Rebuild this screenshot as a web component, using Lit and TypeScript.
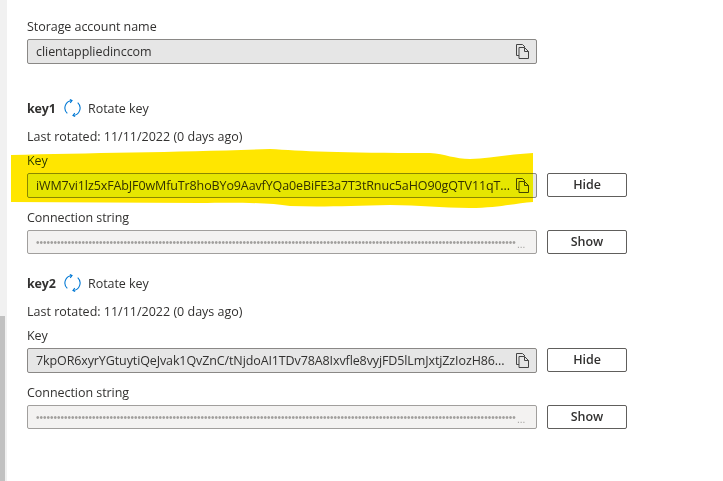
import { LitElement, html, css, svg } from "lit";
import { customElement } from "lit/decorators.js";

const copyIcon = html`<svg class="copy" width="13" height="15" viewBox="0 0 13 15" fill="none" stroke="#444" stroke-width="1">
  <path d="M3 11.5H0.5V0.5H6.5L9 3" />
  <path d="M3 3.5H8.5L12.5 7.5V14.5H3Z" />
  <path d="M8.5 3.5V7.5H12.5" />
</svg>`;

const rotateIcon = html`<svg class="rotate" width="17" height="18" viewBox="0 0 18 18" fill="none" stroke="#0078d4" stroke-width="1.15">
  <path d="M3.5 14.8A8 8 0 0 1 8.5 1" />
  <path d="M6.2 0L8.5 1L6.6 3.6" />
  <path d="M14.5 3.2A8 8 0 0 1 9.5 17" />
  <path d="M11.8 18L9.5 17L11.4 14.4" />
</svg>`;

const DOTS = "•".repeat(137);

@customElement("app-root")
export class AppRoot extends LitElement {
  static styles = css`
    :host {
      display: flex;
      width: 723px;
      height: 481px;
      overflow: hidden;
      position: relative;
      background: #fff;
      font-family: "Open Sans", "Noto Sans", sans-serif;
      font-size: 12.5px;
      letter-spacing: -0.05px;
      color: #323130;
    }
    .track {
      width: 7px;
      flex: none;
      background: #f1f1f1;
      display: flex;
      flex-direction: column;
      justify-content: flex-end;
    }
    .thumb { width: 5px; height: 165px; background: #c1c1c1; }
    .main { flex: none; width: 620px; padding: 17px 0 0 20px; }
    .label { height: 19px; line-height: 19px; display: block; margin-bottom: 3px; }
    .row { display: flex; gap: 10px; height: 25px; }
    .field {
      width: 510px;
      height: 25px;
      box-sizing: border-box;
      flex: none;
      display: flex;
      align-items: center;
      padding: 0 7px 0 8px;
      border: 1px solid #8a8886;
      border-radius: 2px;
      background: #e6e6e6;
      white-space: nowrap;
      overflow: hidden;
    }
    .field.light {
      height: 24px;
      background: #f3f2f1;
      border-color: #a19f9d;
      color: #a19f9d;
      font-family: "Liberation Sans", sans-serif;
      font-size: 10px;
      letter-spacing: 0;
    }
    .more { flex: none; letter-spacing: 0; margin-right: 4px; width: 8px; align-self: flex-end; line-height: 17px; }
    .value { flex: 1; min-width: 0; }
    .value.key { letter-spacing: -0.11px; }
    .copy { flex: none; margin-left: 3px; }
    button {
      all: unset;
      box-sizing: border-box;
      width: 80px;
      height: 24px;
      border: 1px solid #605e5c;
      border-radius: 2px;
      background: #fff;
      text-align: center;
      line-height: 22px;
      font-weight: 600;
      font-size: 12.5px;
      color: #323130;
    }
    .head { display: flex; align-items: center; height: 20px; margin-top: 18px; }
    .head.first { margin-top: 34px; }
    .head b { font-weight: 700; width: 37px; letter-spacing: -0.2px; }
    .head span { margin-left: 7px; }
    .rotated { height: 20px; line-height: 22px; margin-top: 8px; margin-bottom: 5px; letter-spacing: 0; }
    .conn { margin-top: 10px; }
    .hl { position: absolute; left: 0; top: 0; mix-blend-mode: darken; pointer-events: none; }
  `;

  private keyBlock(name: string, key: string, first: boolean) {
    return html`
      <div class="head ${first ? "first" : ""}"><b>${name}</b>${rotateIcon}<span>Rotate key</span></div>
      <div class="rotated">Last rotated: 11/11/2022 (0 days ago)</div>
      <label class="label">Key</label>
      <div class="row">
        <div class="field"><span class="value key">${key}</span>${copyIcon}</div>
        <button>Hide</button>
      </div>
      <label class="label conn">Connection string</label>
      <div class="row">
        <div class="field light"><span class="value">${DOTS}</span><span class="more">...</span></div>
        <button>Show</button>
      </div>
    `;
  }

  render() {
    return html`
      <div class="track"><div class="thumb"></div></div>
      <div class="main">
        <label class="label">Storage account name</label>
        <div class="row">
          <div class="field"><span class="value">clientappliedinccom</span>${copyIcon}</div>
        </div>
        ${this.keyBlock("key1", "iWM7vi1lz5xFAbJF0wMfuTr8hoBYo9AavfYQa0eBiFE3a7T3tRnuc5aHO90gQTV11qT...", true)}
        ${this.keyBlock("key2", "7kpOR6xyrYGtuytiQeJvak1QvZnC/tNjdoAI1TDv78A8Ixvfle8vyjFD5lLmJxtjZzIozH86...", false)}
      </div>
      <svg class="hl" width="723" height="481" viewBox="0 0 723 481">
        ${svg`<path fill="#ffe600" d="M11 155 C90 153 190 152 270 149 C300 151 340 153 430 153 C445 154 455 159 470 159 C490 159 510 154 533 153 L533 202 C515 203 500 208 470 208 C440 208 420 205 390 205 C350 206 320 207 290 206 C270 203 240 202 200 203 L11 202 Z"/>`}
      </svg>
    `;
  }
}
